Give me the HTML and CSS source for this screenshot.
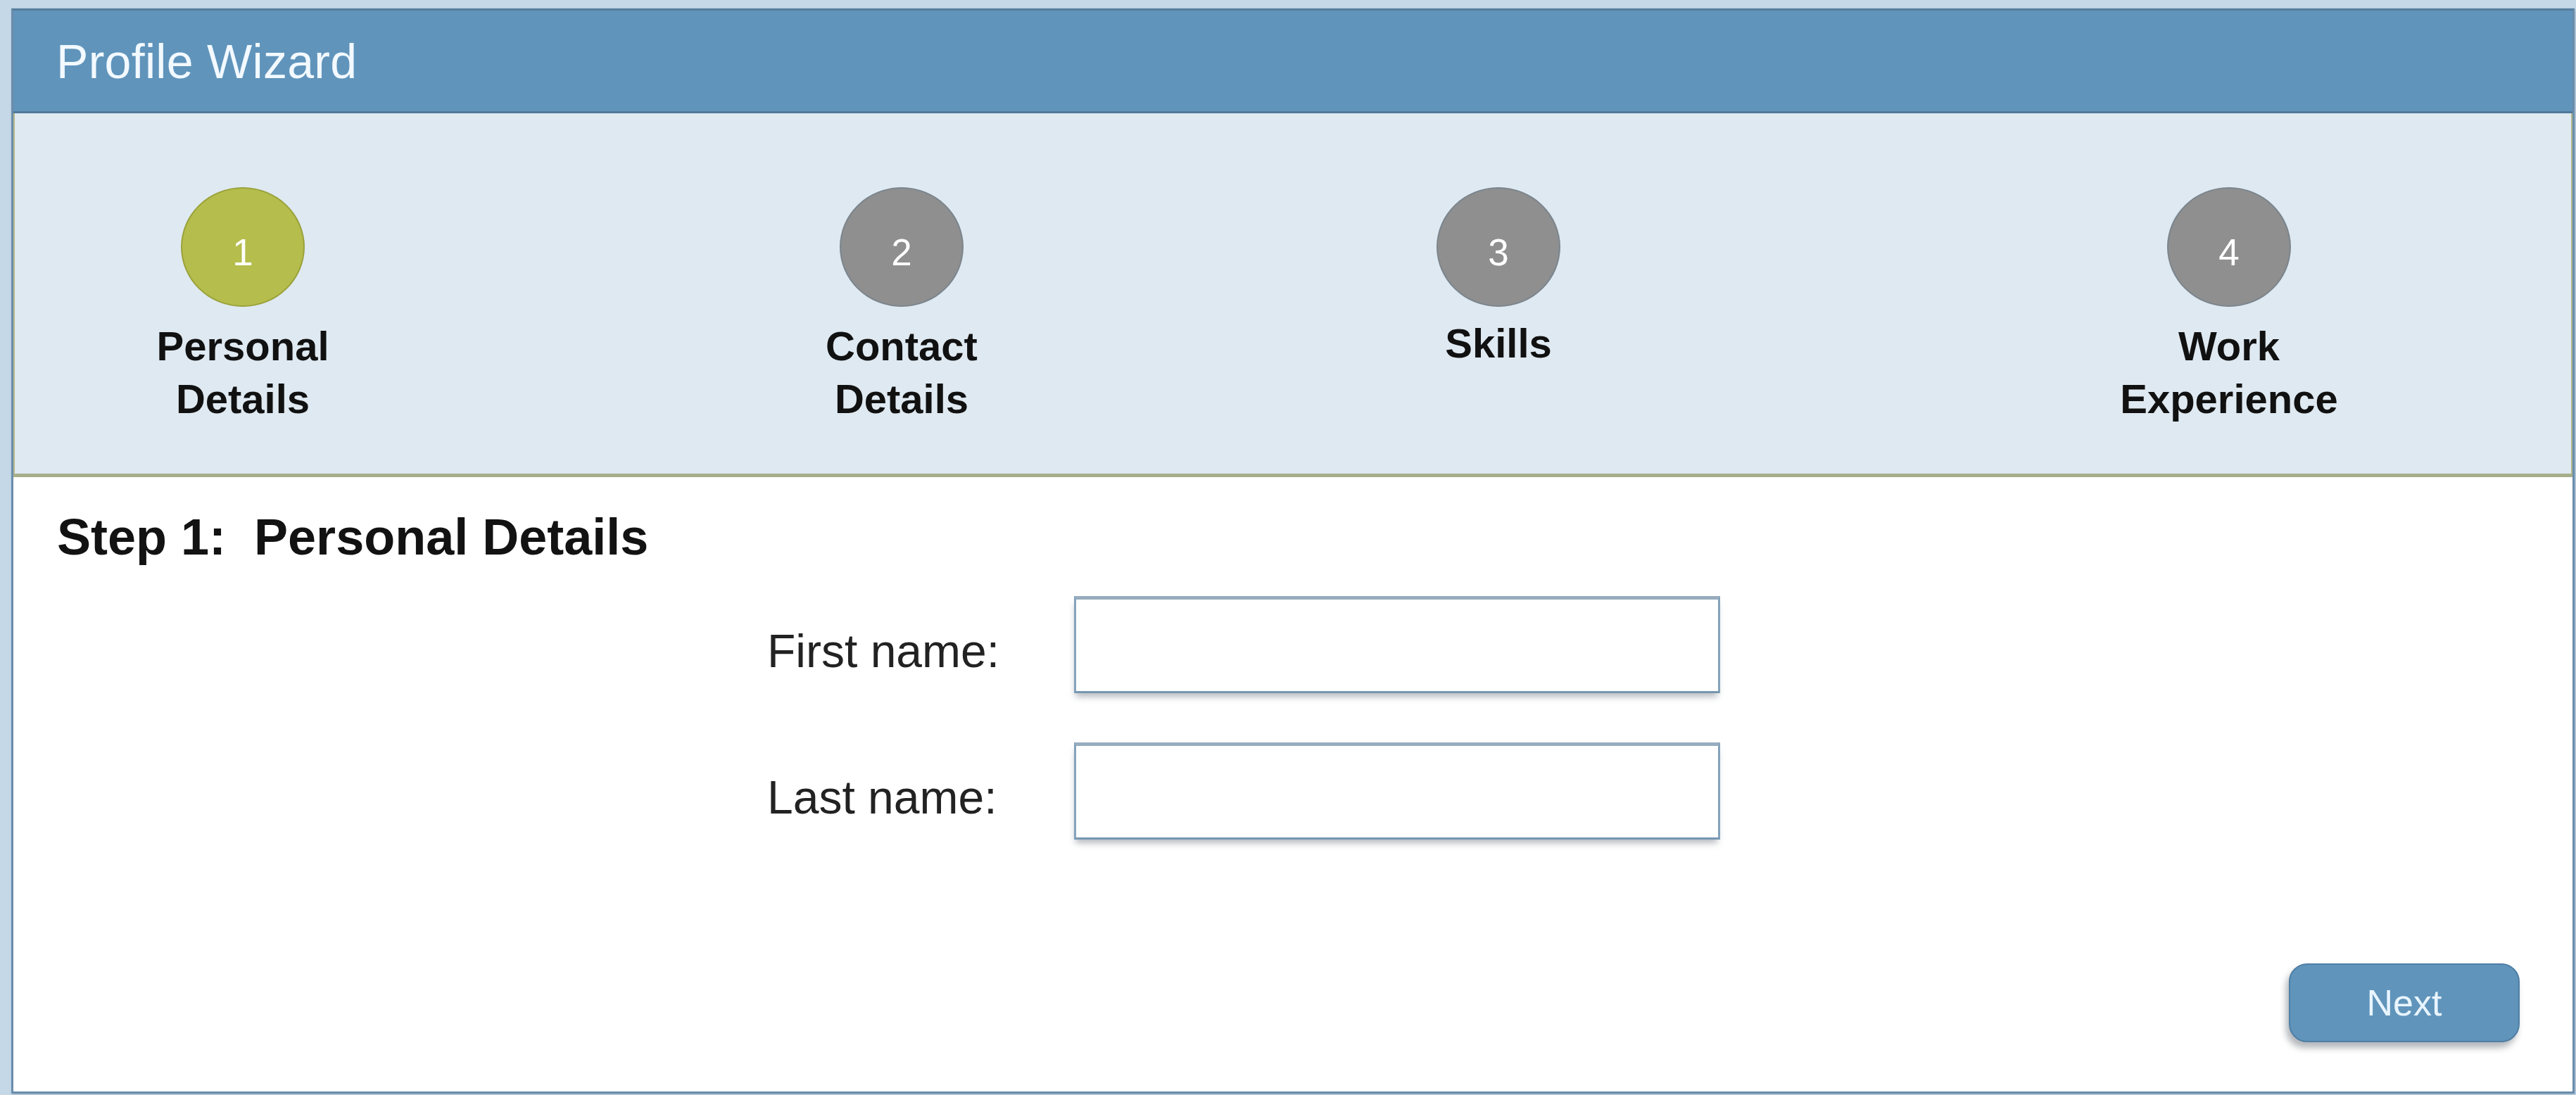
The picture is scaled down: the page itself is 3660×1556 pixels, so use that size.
FILE: index.html
```html
<!DOCTYPE html>
<html lang="en">
<head>
<meta charset="utf-8">
<title>Profile Wizard</title>
<link rel="stylesheet" href="styles.css">
</head>
<body>
<div class="frame">
  <header class="header">
    <h1 class="header-title">Profile Wizard</h1>
  </header>
  <nav class="steps">
    <div class="step">
      <div class="step-circle is-active">1</div>
      <div class="step-label">Personal<br>Details</div>
    </div>
    <div class="step step-2">
      <div class="step-circle">2</div>
      <div class="step-label">Contact<br>Details</div>
    </div>
    <div class="step step-3">
      <div class="step-circle">3</div>
      <div class="step-label step-label-single">Skills</div>
    </div>
    <div class="step step-4">
      <div class="step-circle">4</div>
      <div class="step-label">Work<br>Experience</div>
    </div>
  </nav>
  <main class="content">
    <h2 class="content-title">Step 1:&nbsp; Personal Details</h2>
    <form class="form">
      <label class="form-label" for="first">First name:</label>
      <input class="form-input" id="first" type="text">
      <label class="form-label" for="last">Last name:</label>
      <input class="form-input" id="last" type="text">
    </form>
    <button class="next-btn" type="button">Next</button>
  </main>
</div>
</body>
</html>
```

FILE: styles.css
```css
* {
  box-sizing: border-box;
}

html, body {
  margin: 0;
  padding: 0;
  width: 3660px;
  height: 1556px;
  overflow: hidden;
  background: #c4d8e8;
  font-family: "Liberation Sans", Arial, sans-serif;
}

.frame {
  margin: 12px 2px 0 16px;
  width: 3642px;
  height: 1542px;
  border: 3px solid #6a8dab;
  border-top-color: #557c9c;
  display: flex;
  flex-direction: column;
  background: #ffffff;
  box-shadow: 1px 1px 3px rgba(60, 90, 120, 0.35);
}

.header {
  height: 146px;
  flex: none;
  background: #6094bb;
  border-bottom: 3px solid #50799b;
  display: flex;
  align-items: center;
  padding-left: 61px;
}

.header-title {
  margin: 0;
  font-weight: 400;
  font-size: 68px;
  color: #f2f9ff;
  letter-spacing: 0.3px;
}

.steps {
  flex: none;
  height: 517px;
  background: #dfe9f1;
  border-left: 2px solid #b4b88a;
  border-right: 2px solid #b4b88a;
  border-bottom: 5px solid #a6ad8a;
  display: flex;
  align-items: flex-start;
  padding-top: 105px;
  padding-left: 124px;
}

.step {
  width: 400px;
  flex: none;
  display: flex;
  flex-direction: column;
  align-items: center;
}

.step-2 {
  margin-left: 536px;
}

.step-3 {
  margin-left: 448px;
}

.step-4 {
  margin-left: 638px;
}

.step-circle {
  width: 176px;
  height: 170px;
  border-radius: 50%;
  background: #8f8f8f;
  border: 2px solid #7b858d;
  color: #ffffff;
  font-size: 53px;
  display: flex;
  align-items: center;
  justify-content: center;
  padding-top: 14px;
}

.step-circle.is-active {
  background: #b5bd4c;
  border-color: #9aa23c;
}

.step-label {
  margin-top: 18px;
  font-size: 58px;
  font-weight: 700;
  line-height: 75px;
  text-align: center;
  color: #111111;
}

.step-label-single {
  margin-top: 14px;
}

.content {
  flex: 1;
  display: flex;
  flex-direction: column;
  padding: 45px 75px 70px 62px;
}

.content-title {
  margin: 0;
  font-size: 72px;
  line-height: 80px;
  font-weight: 700;
  color: #121212;
}

.form {
  margin: 44px 0 0 1009px;
  display: grid;
  grid-template-columns: 436px 918px;
  row-gap: 70px;
  align-items: center;
}

.form-label {
  font-size: 66px;
  color: #222222;
  padding-top: 18px;
}

.form-input {
  height: 138px;
  width: 918px;
  margin: 0;
  background: #ffffff;
  border: 3px solid #84a3bb;
  border-top: 5px solid #97adbf;
  border-bottom-color: #7797b1;
  box-shadow: -1px 8px 9px -3px rgba(70, 80, 95, 0.4);
  outline: none;
}

.next-btn {
  margin-top: auto;
  align-self: flex-end;
  width: 328px;
  height: 112px;
  border-radius: 26px;
  background: #6094bb;
  border: 2px solid #4f7fa5;
  color: #e8f4fd;
  font-family: "Liberation Sans", Arial, sans-serif;
  font-size: 52px;
  padding: 0;
  box-shadow: -4px 8px 10px rgba(40, 50, 60, 0.35);
}
```
